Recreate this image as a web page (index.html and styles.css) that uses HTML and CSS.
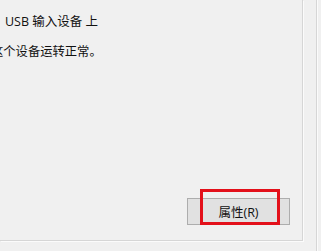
FILE: index.html
```html
<!DOCTYPE html>
<html>
<head>
<meta charset="utf-8">
<link rel="stylesheet" href="styles.css">
</head>
<body>
<div class="page">
  <div class="panel">
    <div class="line line-location">USB 输入设备 上</div>
    <div class="line line-status">这个设备运转正常。</div>
    <div class="actions">
      <div class="btn-wrap">
        <button class="btn">属性(R)</button>
        <div class="highlight"></div>
      </div>
    </div>
  </div>
  <div class="edge"></div>
</div>
</body>
</html>
```
FILE: styles.css
```css
html, body {
  margin: 0;
  padding: 0;
  background: #f0f0f0;
  overflow: hidden;
}
.page {
  display: flex;
  width: 321px;
  height: 251px;
  font-family: "Open Sans", "Noto Sans CJK SC", sans-serif;
  font-size: 12px;
  color: #111111;
}
.panel {
  width: 302px;
  height: 240px;
  border-right: 1px solid #d6d6d6;
  border-bottom: 1px solid #d6d6d6;
  box-shadow: 1px 1px 0 #fbfbfb;
  display: flex;
  flex-direction: column;
  flex-shrink: 0;
}
.line {
  line-height: 16px;
  white-space: nowrap;
}
.line-location {
  margin-top: 14px;
  padding-left: 5px;
  font-size: 12.5px;
}
.line-status {
  margin-top: 13px;
  margin-left: -9px;
  font-family: "Noto Sans CJK SC", sans-serif;
  font-size: 12.3px;
}
.actions {
  margin-top: auto;
  margin-bottom: 15px;
  display: flex;
  justify-content: flex-end;
  padding-right: 12px;
}
.btn-wrap {
  position: relative;
}
.btn {
  display: block;
  width: 103px;
  height: 27px;
  margin: 0;
  padding: 0;
  background: #e1e1e1;
  border: 1px solid #adadad;
  font-family: "Open Sans", "Noto Sans CJK SC", sans-serif;
  font-size: 12.5px;
  color: #111111;
}
.highlight {
  position: absolute;
  left: 13px;
  top: -9px;
  width: 74px;
  height: 30px;
  border: 3px solid #e3101a;
}
.edge {
  margin-left: 13px;
  width: 1px;
  height: 251px;
  background: #d6d6d6;
  box-shadow: 1px 0 0 #fbfbfb;
}
```
